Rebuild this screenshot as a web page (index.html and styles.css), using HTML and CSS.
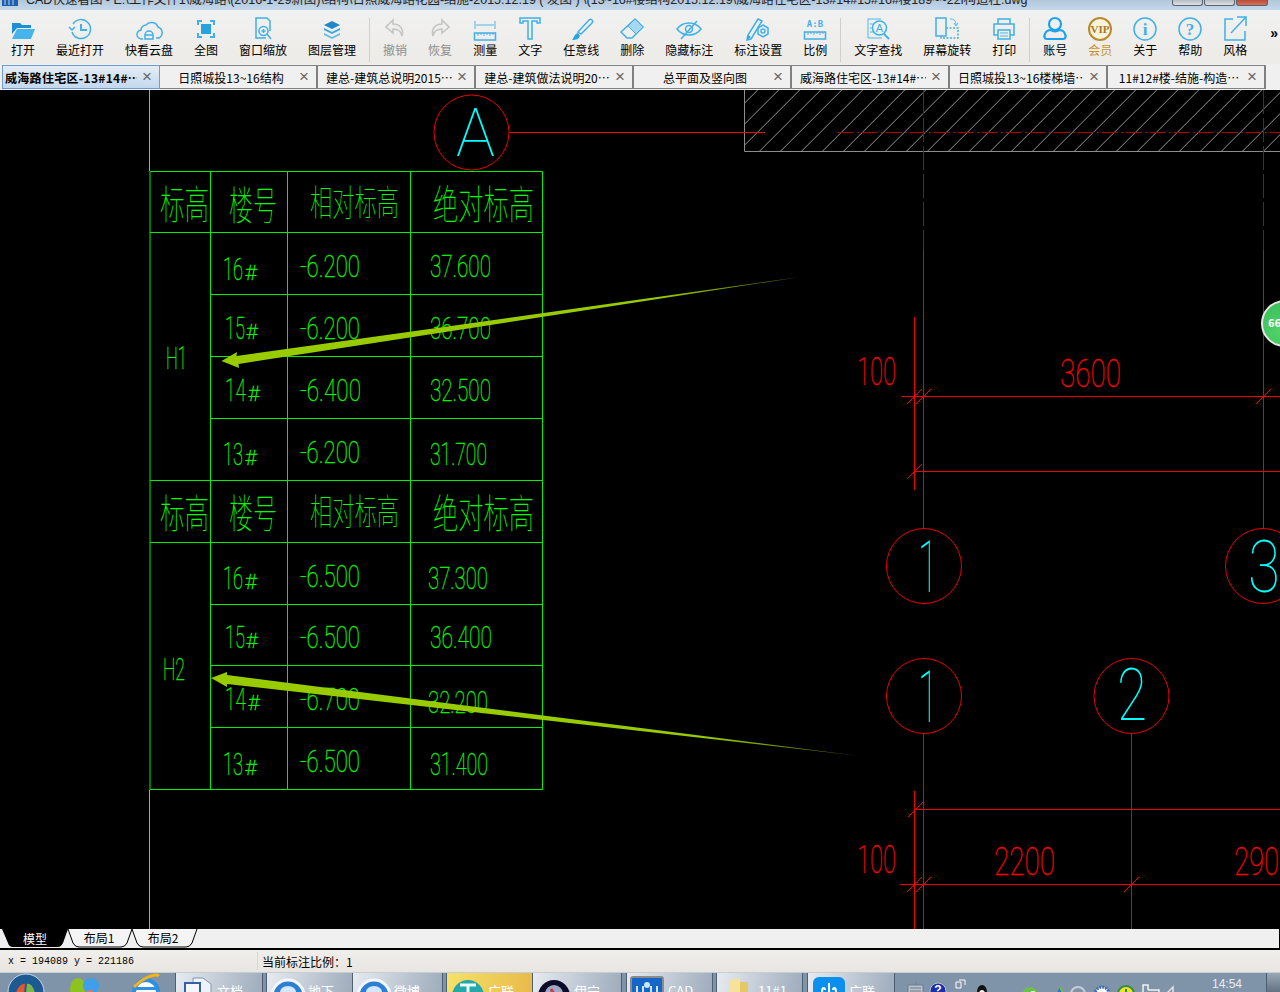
FILE: index.html
```html
<!DOCTYPE html>
<html lang="zh-CN">
<head>
    <meta charset="UTF-8">
    <title>CAD快速看图</title>
    <link rel="stylesheet" href="styles.css">
</head>
<body>
    <div class="titlebar">
        <svg class="app-icon" viewBox="0 0 16 10"><rect x="0" y="0" width="16" height="6" fill="#1d5fa8"/><path d="M3 0v5M7 0v5M11 0v5" stroke="#bcd6ef"/></svg>
        <div class="title-text">CAD快速看图 - E:\工作文件1\威海路\(2016-1-29新图)\结构\日照威海路花园-结施-2015.12.19 ( 发图 ) \(13~16#楼结构2015.12.19\威海路住宅区-13#14#15#16#楼189~~22l构造柱.dwg</div>
        <div class="win-btn"></div>
        <div class="win-btn"></div>
        <div class="win-btn win-close"></div>
    </div>

    <div class="toolbar">
        <div class="tool"><svg viewBox="0 0 24 26"><path d="M1 7h8l2 2h9v3H6l-5 6z" fill="#1c8fd6"/><path d="M1 23l5-10h18l-4 10z" fill="#45b4ec"/></svg><span>打开</span></div>
        <div class="tool"><svg viewBox="0 0 24 26" class="line"><path d="M5 8a9.500 9.500 0 1 1-1 8"/><path d="M1 11l3 3 3-3" stroke-width="1.500"/><path class="thick" d="M13 8v6h6"/></svg><span>最近打开</span></div>
        <div class="tool"><svg viewBox="0 0 24 26" class="line"><path d="M6 23H5a4.500 4.500 0 0 1-1-9 5 5 0 0 1 5-5 7 7 0 0 1 12 2 6 6 0 0 1 1 11h-3"/><path d="M8 23v-4a4 4 0 0 1 8 0v4zM8 19h8"/></svg><span>快看云盘</span></div>
        <div class="tool"><svg viewBox="0 0 24 26" class="line"><path class="thick" d="M4 9V5h4M16 5h4v4M20 17v4h-4M8 21H4v-4"/><rect class="solid" x="7" y="8" width="10" height="10"/></svg><span>全图</span></div>
        <div class="tool"><svg viewBox="0 0 24 26" class="line"><path d="M15 22H5V2h11l3 3v10"/><circle cx="12.500" cy="15" r="4.500"/><path d="M16 18l4 5M10.500 15h4M12.500 13v4"/></svg><span>窗口缩放</span></div>
        <div class="tool"><svg viewBox="0 0 24 26"><path d="M12 5l8 4-8 4-8-4z" fill="#1e88c9"/><path d="M4 12l8 4 8-4v2l-8 4-8-4z" fill="#3aa5e0"/><path d="M4 17l8 4 8-4v2l-8 4-8-4z" fill="#62bdeb"/></svg><span>图层管理</span></div>
        <div class="tool-sep"></div>
        <div class="tool tool-off"><svg viewBox="0 0 24 26" class="line-gray"><path d="M10 4L3 11l7 6v-4c5 0 8 2 9 7 2-7-2-12-9-12z"/></svg><span>撤销</span></div>
        <div class="tool tool-off"><svg viewBox="0 0 24 26" class="line-gray"><path d="M14 4l7 7-7 6v-4c-5 0-8 2-9 7-2-7 2-12 9-12z"/></svg><span>恢复</span></div>
        <div class="tool"><svg viewBox="0 0 24 26" class="line"><path class="thin" d="M2 5v8M22 5v8M3 9h18"/><rect x="1.500" y="17" width="21" height="7"/><path class="thin" d="M5 17v3M8 17v2M11 17v3M14 17v2M17 17v3M20 17v2"/></svg><span>测量</span></div>
        <div class="tool"><svg viewBox="0 0 24 26" class="line"><path d="M2 2h20v5h-3V5h-5v18H10V5H5v2H2z"/></svg><span>文字</span></div>
        <div class="tool"><svg viewBox="0 0 24 26" class="line"><path d="M9 16L20 4a2 2 0 0 1 3 3L12 18z"/><path class="solid" d="M9 17l2 3c-1 3-4 4-8 4 2-2 2-6 6-7z"/></svg><span>任意线</span></div>
        <div class="tool"><svg viewBox="0 0 24 26" class="line"><path d="M15 3l8 8-11 11H7l-6-6z"/><path class="pale" d="M15 3l8 8-7 7-8-8z"/></svg><span>删除</span></div>
        <div class="tool"><svg viewBox="0 0 24 26" class="line"><path d="M0 13c6-8 18-8 24 0-6 8-18 8-24 0z"/><circle cx="12" cy="13" r="3.500"/><path d="M4 23L20 5"/></svg><span>隐藏标注</span></div>
        <div class="tool"><svg viewBox="0 0 24 26" class="line"><path d="M12 3l4 2-11 18-4 1 1-5z"/><path class="solid" d="M1 24l1-5 3 2z"/><circle cx="17" cy="15" r="2"/><path d="M17 9l5 3v6l-5 3-5-3v-6z"/></svg><span>标注设置</span></div>
        <div class="tool"><svg viewBox="0 0 24 26" class="line"><text x="12" y="11" class="ab-text">A:B</text><rect x="1.500" y="16" width="21" height="7"/><path class="thin" d="M5 16v3M8 16v2M11 16v3M14 16v2M17 16v3M20 16v2"/></svg><span>比例</span></div>
        <div class="tool-sep"></div>
        <div class="tool"><svg viewBox="0 0 24 26" class="line"><path class="thin" d="M15 3H2v19h14M4 8h3M4 12h3M4 16h3"/><circle cx="13.500" cy="12" r="7"/><text x="13.500" y="16" class="find-text">A</text><path class="thick" d="M18 18l5 5"/></svg><span>文字查找</span></div>
        <div class="tool"><svg viewBox="0 0 24 26" class="line"><path d="M1 2h10v18H1z"/><path d="M11 12h12v10H6v-2" stroke-dasharray="2 1.500"/><path class="thin" d="M15 3c4 0 6 2 6 6M19 7l2 3 2-3"/></svg><span>屏幕旋转</span></div>
        <div class="tool"><svg viewBox="0 0 24 26" class="line"><path d="M6 8V3h12v5M6 19H2V8h20v11h-4"/><rect x="6" y="14" width="12" height="9"/><path class="thin" d="M8 17h8M8 20h8"/></svg><span>打印</span></div>
        <div class="tool-sep"></div>
        <div class="tool"><svg viewBox="0 0 24 26" class="line-strong"><circle cx="12" cy="8" r="6"/><path d="M4 23c-3 0-3-3-2-5 1-3 4-4 6-4 2 2 6 2 8 0 2 0 5 1 6 4 1 2 1 5-2 5z"/></svg><span>账号</span></div>
        <div class="tool tool-vip"><svg viewBox="0 0 24 26"><circle cx="12" cy="13" r="11" fill="#fbf3dc" stroke="#b98a2c" stroke-width="2"/><text x="12" y="17" class="vip-text">VIP</text></svg><span>会员</span></div>
        <div class="tool"><svg viewBox="0 0 24 26" class="line"><circle cx="12" cy="13" r="11"/><text x="12" y="19" class="mark-text">i</text></svg><span>关于</span></div>
        <div class="tool"><svg viewBox="0 0 24 26" class="line"><circle cx="12" cy="13" r="11"/><text x="12" y="19" class="mark-text">?</text></svg><span>帮助</span></div>
        <div class="tool"><svg viewBox="0 0 24 26" class="line"><path d="M10 3H2v21h20v-9"/><path d="M14 1h9v9"/><path d="M23 1L8 17"/></svg><span>风格</span></div>
        <div class="more">»</div>
    </div>

    <div class="tabs">
        <div class="tab tab-active"><span class="tab-name">威海路住宅区-13#14#⋯</span><span class="tab-close">×</span></div>
        <div class="tab"><span class="tab-name">日照城投13~16结构</span><span class="tab-close">×</span></div>
        <div class="tab"><span class="tab-name">建总-建筑总说明2015⋯</span><span class="tab-close">×</span></div>
        <div class="tab"><span class="tab-name">建总-建筑做法说明20⋯</span><span class="tab-close">×</span></div>
        <div class="tab"><span class="tab-name">总平面及竖向图</span><span class="tab-close">×</span></div>
        <div class="tab"><span class="tab-name">威海路住宅区-13#14#⋯</span><span class="tab-close">×</span></div>
        <div class="tab"><span class="tab-name">日照城投13~16楼梯墙⋯</span><span class="tab-close">×</span></div>
        <div class="tab"><span class="tab-name">11#12#楼-结施-构造⋯</span><span class="tab-close">×</span></div>
    </div>

    <div class="canvas">
        <svg class="drawing" viewBox="0 90 1280 839">
            <defs>
                <pattern id="hatch" width="21" height="21" patternUnits="userSpaceOnUse" patternTransform="translate(7.700 0)">
                    <path d="M-1 22L22 -1" stroke="#969696" stroke-width="1"/>
                </pattern>
                <linearGradient id="fade1" gradientUnits="userSpaceOnUse" x1="221" y1="0" x2="800" y2="0">
                    <stop offset="0" stop-color="#99cc00"/><stop offset=".75" stop-color="#99cc00"/><stop offset="1" stop-color="#4d6600"/>
                </linearGradient>
                <linearGradient id="fade2" gradientUnits="userSpaceOnUse" x1="211" y1="0" x2="860" y2="0">
                    <stop offset="0" stop-color="#99cc00"/><stop offset=".75" stop-color="#99cc00"/><stop offset="1" stop-color="#4d6600"/>
                </linearGradient>
            </defs>

            <!-- axis lines and hatching -->
            <path class="cyan-line" d="M149.500 90V171M149.500 790V929"/>
            <rect x="744.500" y="90" width="536" height="61" fill="url(#hatch)"/>
            <path class="gray-line" d="M744.500 90V151.500H1280"/>
            <path class="red-bold" d="M509 132.500H765"/>
            <path class="red-dash" d="M838 132.500H1280"/>
            <path class="red-dash2" d="M923.500 90V250M1263.500 90V250"/>

            <ellipse class="red-line" cx="471.500" cy="132.500" rx="37.500" ry="37.500"/>
            <circle class="red-line" cx="924" cy="566" r="37.500"/>
            <circle class="red-line" cx="1263" cy="566" r="37.500"/>
            <circle class="red-line" cx="924" cy="696" r="37.500"/>
            <circle class="red-line" cx="1131.500" cy="696" r="37.500"/>

            <!-- dimensions -->
            <path class="red-line" d="M923.500 250V528M1263.500 250V528M914.500 317V490M901 396.500H1280M914.500 471.500H1280"/>
            <path class="red-line" d="M923.500 733V929M1131.500 733V929M914.500 791V929M914.500 809.500H1280M900 884.500H1280"/>
            <path class="red-line" d="M907 404l15-15M916 404l15-15M1256 404l15-15M907 479l15-15M908 817l15-15M907 892l15-15M916 892l15-15M1124 892l15-15"/>

            <text class="cad-red" x="857" y="385" textLength="39" lengthAdjust="spacingAndGlyphs">100</text>
            <text class="cad-red" x="1060" y="387" textLength="61" lengthAdjust="spacingAndGlyphs">3600</text>
            <text class="cad-red" x="857" y="873" textLength="39" lengthAdjust="spacingAndGlyphs">100</text>
            <text class="cad-red" x="994" y="875" textLength="61" lengthAdjust="spacingAndGlyphs">2200</text>
            <text class="cad-red" x="1234" y="875" textLength="45" lengthAdjust="spacingAndGlyphs">290</text>

            <text class="cad-axis cad-axis-a" x="456" y="156" textLength="39" lengthAdjust="spacingAndGlyphs">A</text>
            <text class="cad-axis" x="918" y="592" textLength="20" lengthAdjust="spacingAndGlyphs">1</text>
            <text class="cad-axis" x="1248" y="592" textLength="32" lengthAdjust="spacingAndGlyphs">3</text>
            <text class="cad-axis" x="918" y="722" textLength="20" lengthAdjust="spacingAndGlyphs">1</text>
            <text class="cad-axis" x="1117" y="720" textLength="30" lengthAdjust="spacingAndGlyphs">2</text>

            <!-- level table -->
            <path class="green-line" d="M150 171.500H542.500V789.500H150V171.500M150 232.500H542.500M210.500 294.500H542.500M210.500 356.500H542.500M210.500 418.500H542.500M150 480.500H542.500M150 542.500H542.500M210.500 604.500H542.500M210.500 665.500H542.500M210.500 727.500H542.500"/>
            <path class="green-line" d="M210.500 171.500V789.500M287.500 171.500V789.500M410.500 171.500V789.500"/>

            <text class="cad-head" x="160" y="219" textLength="49" lengthAdjust="spacingAndGlyphs">标高</text>
            <text class="cad-head" x="229" y="220" textLength="48" lengthAdjust="spacingAndGlyphs">楼号</text>
            <text class="cad-head cad-head-sm" x="310" y="216" textLength="89" lengthAdjust="spacingAndGlyphs">相对标高</text>
            <text class="cad-head" x="433" y="219" textLength="101" lengthAdjust="spacingAndGlyphs">绝对标高</text>

            <text class="cad-head" x="160" y="528" textLength="49" lengthAdjust="spacingAndGlyphs">标高</text>
            <text class="cad-head" x="229" y="528" textLength="48" lengthAdjust="spacingAndGlyphs">楼号</text>
            <text class="cad-head cad-head-sm" x="310" y="525" textLength="89" lengthAdjust="spacingAndGlyphs">相对标高</text>
            <text class="cad-head" x="433" y="528" textLength="101" lengthAdjust="spacingAndGlyphs">绝对标高</text>

            <text class="cad-num" x="166" y="369" textLength="21" lengthAdjust="spacingAndGlyphs">H1</text>
            <text class="cad-num" x="163" y="680" textLength="22" lengthAdjust="spacingAndGlyphs">H2</text>

            <text class="cad-num" x="223" y="280" textLength="20" lengthAdjust="spacingAndGlyphs">16</text><text class="cad-hash" x="245" y="280">#</text>
            <text class="cad-num" x="300" y="277" textLength="60" lengthAdjust="spacingAndGlyphs">-6.200</text>
            <text class="cad-num" x="430" y="277" textLength="61" lengthAdjust="spacingAndGlyphs">37.600</text>
            <text class="cad-num" x="225" y="339" textLength="20" lengthAdjust="spacingAndGlyphs">15</text><text class="cad-hash" x="246" y="339">#</text>
            <text class="cad-num" x="300" y="339" textLength="60" lengthAdjust="spacingAndGlyphs">-6.200</text>
            <text class="cad-num" x="430" y="339" textLength="61" lengthAdjust="spacingAndGlyphs">36.700</text>
            <text class="cad-num" x="225" y="401" textLength="21" lengthAdjust="spacingAndGlyphs">14</text><text class="cad-hash" x="248" y="401">#</text>
            <text class="cad-num" x="300" y="401" textLength="61" lengthAdjust="spacingAndGlyphs">-6.400</text>
            <text class="cad-num" x="430" y="401" textLength="61" lengthAdjust="spacingAndGlyphs">32.500</text>
            <text class="cad-num" x="223" y="465" textLength="20" lengthAdjust="spacingAndGlyphs">13</text><text class="cad-hash" x="245" y="465">#</text>
            <text class="cad-num" x="300" y="463" textLength="60" lengthAdjust="spacingAndGlyphs">-6.200</text>
            <text class="cad-num" x="430" y="465" textLength="57" lengthAdjust="spacingAndGlyphs">31.700</text>

            <text class="cad-num" x="223" y="589" textLength="20" lengthAdjust="spacingAndGlyphs">16</text><text class="cad-hash" x="245" y="589">#</text>
            <text class="cad-num" x="300" y="587" textLength="60" lengthAdjust="spacingAndGlyphs">-6.500</text>
            <text class="cad-num" x="428" y="589" textLength="60" lengthAdjust="spacingAndGlyphs">37.300</text>
            <text class="cad-num" x="225" y="648" textLength="20" lengthAdjust="spacingAndGlyphs">15</text><text class="cad-hash" x="246" y="648">#</text>
            <text class="cad-num" x="300" y="648" textLength="60" lengthAdjust="spacingAndGlyphs">-6.500</text>
            <text class="cad-num" x="430" y="648" textLength="62" lengthAdjust="spacingAndGlyphs">36.400</text>
            <text class="cad-num" x="225" y="710" textLength="21" lengthAdjust="spacingAndGlyphs">14</text><text class="cad-hash" x="248" y="710">#</text>
            <text class="cad-num" x="300" y="710" textLength="60" lengthAdjust="spacingAndGlyphs">-6.700</text>
            <text class="cad-num" x="428" y="713" textLength="60" lengthAdjust="spacingAndGlyphs">32.200</text>
            <text class="cad-num" x="223" y="775" textLength="20" lengthAdjust="spacingAndGlyphs">13</text><text class="cad-hash" x="245" y="775">#</text>
            <text class="cad-num" x="300" y="772" textLength="60" lengthAdjust="spacingAndGlyphs">-6.500</text>
            <text class="cad-num" x="430" y="775" textLength="58" lengthAdjust="spacingAndGlyphs">31.400</text>

            <!-- markup arrows -->
            <polygon fill="url(#fade1)" points="221.500,361 237,352 236.500,356 800,277 238.500,364 239,368"/>
            <polygon fill="url(#fade2)" points="211,678 227,672 227,675 860,756 227,684 227,687"/>
        </svg>
        <div class="bubble">66</div>
    </div>

    <div class="sheet-strip">
        <svg class="sheet-tabs" viewBox="0 0 200 20">
            <path class="sheet-tab" d="M132 0L127 14Q125 18 121 18H79Q75 18 73 14L68 0"/>
            <path class="sheet-tab" d="M197 0L192 14Q190 18 186 18H143Q139 18 137 14L132 0"/>
            <path d="M2 0L8 14Q9 18 13 18H58Q61 18 63 14L68 0Z" fill="#000"/>
            <text class="sheet-label sheet-label-on" x="35" y="15">模型</text>
            <text class="sheet-label" x="99" y="14">布局1</text>
            <text class="sheet-label" x="163" y="14">布局2</text>
        </svg>
    </div>

    <div class="statusbar">
        <div class="status-coord">x = 194089 y = 221186</div>
        <div class="status-scale">当前标注比例：1</div>
    </div>

    <div class="taskbar">
        <svg class="quick" viewBox="0 0 175 20">
            <circle cx="26" cy="19" r="18" fill="#1d5a92" stroke="#c9d8e6"/>
            <path d="M16 20c2-7 7-10 9-9l-1 9z" fill="#e4572e"/>
            <path d="M27 11c3-1 6 2 8 9h-9z" fill="#7ab648"/>
            <ellipse cx="78" cy="16" rx="8" ry="11" fill="#8dc21f"/>
            <circle cx="91" cy="13" r="8" fill="#3f9fe8"/>
            <circle cx="90" cy="22" r="5" fill="#d9776b"/>
            <circle cx="146" cy="19" r="12" fill="#fff" stroke="#2f8fe0" stroke-width="4"/>
            <rect x="136" y="14" width="20" height="3" fill="#2f8fe0"/>
            <path d="M134 14C144 4 156 0 159 3" fill="none" stroke="#f5b21a" stroke-width="3"/>
        </svg>
        <div class="task task-doc"><svg viewBox="0 0 36 20"><path d="M14 2h10l8 6v12H14z" fill="#eef3fa" stroke="#7f93b5"/><rect x="5" y="6" width="17" height="14" fill="#3560a8"/><rect x="7" y="8" width="13" height="10" fill="#f3f6fb"/></svg><span>文档</span></div>
        <div class="task task-b"><svg viewBox="0 0 36 20"><circle cx="18" cy="20" r="16" fill="#2d7fd6" stroke="#f4f7fb" stroke-width="3"/><path d="M10 16a8 6 0 0 1 16 0z" fill="#d5e7fa"/></svg><span>地下</span></div>
        <div class="task task-c"><svg viewBox="0 0 36 20"><circle cx="18" cy="20" r="16" fill="#2d7fd6" stroke="#f4f7fb" stroke-width="3"/><path d="M10 16a8 6 0 0 1 16 0z" fill="#d5e7fa"/></svg><span>微博</span></div>
        <div class="task task-on"><svg viewBox="0 0 36 20"><circle cx="18" cy="20" r="16" fill="#26a7a9"/><path d="M10 9h16M18 9v11" stroke="#e9fbfb" stroke-width="3"/></svg><span>广联</span></div>
        <div class="task task-e"><svg viewBox="0 0 36 20"><circle cx="18" cy="20" r="16" fill="#0c0c2a"/><circle cx="18" cy="18" r="9" fill="#9fa9c4"/><path d="M15 13l6 10" stroke="#c23b4d" stroke-width="3"/></svg><span>伊宁</span></div>
        <div class="task task-f"><svg viewBox="0 0 36 20"><rect x="1" y="1" width="32" height="20" rx="2" fill="#1467c8" stroke="#8b8b8b" stroke-width="2"/><path d="M7 10v9M27 10v9M13 10v9M21 10v9" stroke="#cfe4fa" stroke-width="2"/><circle cx="17" cy="9" r="3" fill="#cfe4fa"/></svg><span>CAD</span></div>
        <div class="task task-g"><svg viewBox="0 0 36 20"><path d="M10 4l10-2v18H10z" fill="#f6e39a"/><path d="M20 6h8v14h-8z" fill="#e5c766"/></svg><span>11#1</span></div>
        <div class="task task-h"><svg viewBox="0 0 36 20"><rect x="2" y="1" width="32" height="22" rx="6" fill="#0a8fef"/><path d="M11 16c0-5 3-5 3-2M18 7v11M25 16c0-5-3-5-3-2" fill="none" stroke="#fff" stroke-width="2"/></svg><span>广联</span></div>
        <div class="tray">
            <svg class="tray-icons" viewBox="0 0 290 20">
                <rect x="13" y="12" width="15" height="9" fill="#b9c2cc" stroke="#6f7c8a"/>
                <path d="M15 15h11M15 18h11M21 12V9" stroke="#6f7c8a"/>
                <circle cx="43" cy="18" r="8" fill="#1c2fa8" stroke="#b6c1d0"/>
                <text class="tray-q" x="43" y="21">?</text>
                <path d="M61 9h5v6h-5zM64 7h6v5" fill="none" stroke="#fff"/>
                <ellipse cx="87" cy="19" rx="5" ry="7" fill="#111"/>
                <ellipse cx="87" cy="21" rx="3" ry="4" fill="#f5f5f5"/>
                <circle cx="135" cy="22" r="8" fill="#6cc04a"/>
                <circle cx="138" cy="21" r="3" fill="#f2f7ef"/>
                <path d="M160 24l5-10 5 10z" fill="#2f6fbf"/>
                <path d="M165 14l5 10" stroke="#6cc04a" stroke-width="2"/>
                <circle cx="183" cy="21" r="7" fill="none" stroke="#c8ced5" stroke-width="2"/>
                <circle cx="207" cy="21" r="7" fill="#fff" stroke="#3b6fb5" stroke-width="3" stroke-dasharray="2 1"/>
                <circle cx="231" cy="21" r="8" fill="#e8e82b" stroke="#3a8a3a" stroke-width="2"/>
                <path d="M231 16v6" stroke="#3a8a3a" stroke-width="2"/>
                <path d="M248 22v-10h5v5M253 17h11v5" fill="none" stroke="#f2f2f2" stroke-width="1.500"/>
                <path d="M273 22v-3l5-5v8" fill="none" stroke="#dfe3e8" stroke-width="1.500"/>
            </svg>
            <div class="clock">14:54</div>
            <div class="show-desktop"></div>
        </div>
    </div>
</body>
</html>
```

FILE: styles.css
```css
* {
    box-sizing: border-box;
}

html, body {
    margin: 0;
    height: 992px;
    overflow: hidden;
}

body {
    width: 1280px;
    font-family: "Liberation Sans", "Noto Sans CJK SC", sans-serif;
    font-size: 12px;
    color: #000;
    background-color: #f0f0f0;
}

/* window title, mostly cut off by the top of the screen */
.titlebar {
    height: 10px;
    display: flex;
    overflow: hidden;
    background: linear-gradient(#b3c7da, #c4d8ec);
}

.app-icon {
    width: 16px;
    height: 10px;
    margin-left: 2px;
}

.title-text {
    width: 1164px;
    margin: -7px 0 0 8px;
    font-size: 12.5px;
    line-height: 14px;
    white-space: nowrap;
    overflow: hidden;
    color: #222;
}

.win-btn {
    flex: none;
    width: 31px;
    height: 6px;
    margin-right: 1px;
    background: linear-gradient(#b5bcc4, #dde2e8);
    border: 1px solid #59616b;
    border-top: none;
    border-radius: 0 0 3px 3px;
}

.win-close {
    width: 32px;
    margin-right: 0;
    background: linear-gradient(#b84a38, #d8705e);
}

.titlebar .win-btn:nth-child(3) {
    margin-left: -18px;
}

/* toolbar */
.toolbar {
    height: 54px;
    padding: 6px 0 0 0.5px;
    display: flex;
    position: relative;
    background: linear-gradient(#f1f1f1, #ecebe7);
}

.tool {
    display: flex;
    flex-direction: column;
    align-items: center;
    padding: 0 10.5px;
    font-family: "Noto Sans CJK SC", sans-serif;
    font-size: 12px;
    white-space: nowrap;
}

.tool svg {
    width: 24px;
    height: 26px;
    overflow: visible;
}

.tool span {
    line-height: 16px;
}

.tool-off {
    color: #8e8e8e;
}

.tool-vip {
    color: #c8922e;
}

.tool-sep {
    width: 6px;
    height: 44px;
    margin-top: 2px;
    background: linear-gradient(#cfcfcf, #cfcfcf) center / 1px 100% no-repeat;
}

.more {
    position: absolute;
    right: 2px;
    top: 16px;
    font-size: 14px;
    font-weight: 700;
    line-height: 14px;
}

.line path, .line circle, .line rect {
    fill: none;
    stroke: #3fb0e8;
    stroke-width: 1.500;
}

.line .thin {
    stroke-width: 0.900;
}

.line .thick {
    stroke-width: 2;
}

.line .solid {
    fill: #29a3e0;
    stroke: none;
}

.line .pale {
    fill: #a6d8f3;
    stroke-width: 1;
}

.line-gray path {
    fill: none;
    stroke: #c4c4c4;
    stroke-width: 1.600;
}

.line-strong path, .line-strong circle {
    fill: none;
    stroke: #1ba1ee;
    stroke-width: 2.200;
}

.ab-text {
    font-family: "DejaVu Sans Mono", monospace;
    font-size: 9px;
    font-weight: 700;
    text-anchor: middle;
    fill: #3fb0e8;
}

.find-text {
    font-family: "Liberation Sans", sans-serif;
    font-size: 11px;
    text-anchor: middle;
    fill: #3fb0e8;
}

.vip-text {
    font-family: "Liberation Serif", serif;
    font-size: 11px;
    font-weight: 700;
    text-anchor: middle;
    fill: #a9791f;
}

.mark-text {
    font-family: "Liberation Serif", serif;
    font-size: 17px;
    font-weight: 700;
    text-anchor: middle;
    fill: #3fb0e8;
}

/* document tabs */
.tabs {
    height: 26px;
    padding: 1px 0 1px 2px;
    display: flex;
    background-color: #f0f0f0;
}

.tab {
    width: 158px;
    display: flex;
    align-items: center;
    padding-left: 8px;
    border: 1px solid #808080;
    border-left: none;
    border-right-width: 2px;
    font-family: "Noto Sans CJK SC", sans-serif;
    font-size: 12px;
    white-space: nowrap;
}

.tab-active {
    padding-left: 2px;
    border: 1px solid #6f9bcf;
    background: linear-gradient(#e4edf6, #c3d8ee);
    font-weight: 700;
}

.tab-active .tab-name {
    letter-spacing: 0.3px;
}

.tab-name {
    flex: 1;
    min-width: 0;
    overflow: hidden;
    text-align: center;
}

.tab-close {
    flex: none;
    width: 14px;
    margin: 0 5px 0 3px;
    font-family: "Liberation Sans", sans-serif;
    font-size: 17px;
    font-weight: 400;
    line-height: 18px;
    text-align: center;
    color: #666;
}

/* drawing area */
.canvas {
    height: 839px;
    position: relative;
    overflow: hidden;
    background-color: #000;
}

.drawing {
    display: block;
    width: 1280px;
    height: 839px;
}

.cyan-line {
    fill: none;
    stroke: #00e5ff;
}

.gray-line {
    fill: none;
    stroke: #8c8c8c;
}

.red-line {
    fill: none;
    stroke: #f00000;
}

.red-bold {
    fill: none;
    stroke: #ff0000;
    stroke-width: 1.200;
}

.red-dash {
    fill: none;
    stroke: #b00000;
    stroke-dasharray: 16 3 2 3;
}

.red-dash2 {
    fill: none;
    stroke: #b00000;
    stroke-dasharray: 24 4;
}

.green-line {
    fill: none;
    stroke: #00f000;
}

.cad-num, .cad-hash, .cad-red, .cad-axis {
    font-family: Roboto, "Liberation Sans", sans-serif;
    font-weight: 100;
    stroke-width: 0.350;
}

.cad-num {
    font-size: 31px;
    fill: #00ff00;
    stroke: #00ff00;
}

.cad-hash {
    font-size: 21px;
    fill: #00ff00;
    stroke: #00ff00;
}

.cad-red {
    font-size: 39px;
    fill: #ff0000;
    stroke: #ff0000;
}

.cad-axis {
    font-size: 72px;
    fill: #00ffff;
}

.cad-axis-a {
    font-size: 66px;
}

.cad-head {
    font-family: "Noto Sans CJK SC", sans-serif;
    font-size: 40px;
    font-weight: 100;
    fill: #00ff00;
}

.cad-head-sm {
    font-size: 36px;
}

.bubble {
    position: absolute;
    left: 1261px;
    top: 210px;
    width: 47px;
    height: 47px;
    padding: 15px 0 0 5px;
    border: 2px solid #e4e8e4;
    border-radius: 50%;
    background: radial-gradient(circle at 40% 70%, #4fd268, #37b957);
    font-family: "DejaVu Sans Mono", monospace;
    font-size: 11px;
    font-weight: 700;
    line-height: 13px;
    color: #fff;
}

/* model / layout tabs */
.sheet-strip {
    height: 21px;
    border-right: 1px solid #000;
    border-bottom: 2px solid #000;
    background-color: #f0f0f0;
}

.sheet-tabs {
    display: block;
    width: 200px;
    height: 20px;
}

.sheet-tab {
    fill: #f4f4f4;
    stroke: #000;
}

.sheet-label {
    font-family: "Noto Sans CJK SC", sans-serif;
    font-size: 12px;
    text-anchor: middle;
    fill: #000;
}

.sheet-label-on {
    fill: #fff;
}

/* status bar */
.statusbar {
    height: 22px;
    display: flex;
    align-items: center;
    background: linear-gradient(#f0efed, #e9e5e0);
}

.status-coord {
    width: 258px;
    height: 18px;
    padding-left: 8px;
    border-right: 1px solid #d8d6d2;
    font-family: "Liberation Mono", monospace;
    font-size: 10px;
    line-height: 20px;
    white-space: pre;
}

.status-scale {
    padding-left: 4px;
    font-family: "Noto Sans CJK SC", sans-serif;
    font-size: 12px;
}

/* windows taskbar */
.taskbar {
    height: 20px;
    display: flex;
    overflow: hidden;
    background: #7f93a9;
    border-top: 1px solid #c5ced8;
}

.quick {
    flex: none;
    width: 175px;
    height: 20px;
}

.task {
    flex: none;
    width: 87px;
    display: flex;
    padding: 3px 0 0 3px;
    gap: 2px;
    background: linear-gradient(100deg, #e7ebf0, #9eacbc);
    border-left: 1px solid #4f5f72;
    border-right: 1px solid #4f5f72;
    font-family: "Noto Sans CJK SC", sans-serif;
    font-size: 13px;
    line-height: 22px;
    color: #fff;
}

.task svg {
    flex: none;
    width: 36px;
    height: 20px;
    overflow: visible;
}

.task span {
    margin-top: 4px;
}

.task-doc {
    width: 88px;
}

.task-b {
    margin-left: 3px;
}

.task-c {
    width: 90px;
    border-left: none;
}

.task-on {
    margin-left: 3px;
    background: linear-gradient(100deg, #f6e26a, #e9b94a);
}

.task-e {
    width: 89px;
    border-left: none;
}

.task-f {
    margin-left: 4px;
}

.task-g {
    margin-left: 3px;
}

.task-h {
    width: 88px;
    margin-left: 4px;
}

.tray {
    flex: 1;
    display: flex;
    position: relative;
}

.tray-icons {
    width: 290px;
    height: 20px;
    flex: none;
}

.tray-q {
    font-family: "Liberation Sans", sans-serif;
    font-size: 12px;
    font-weight: 700;
    text-anchor: middle;
    fill: #fff;
}

.clock {
    margin-left: 27px;
    font-family: "Liberation Sans", sans-serif;
    font-size: 12px;
    line-height: 22px;
    color: #e8edf2;
}

.show-desktop {
    position: absolute;
    right: 0;
    top: 0;
    width: 14px;
    height: 20px;
    background: linear-gradient(#9aa8b6, #5f6f7f);
    border-left: 1px solid #4f5f72;
}
```
